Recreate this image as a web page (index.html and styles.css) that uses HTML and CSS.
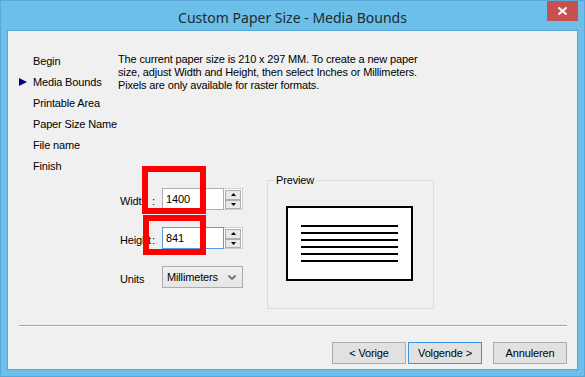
FILE: index.html
```html
<!DOCTYPE html>
<html>
<head>
<meta charset="utf-8">
<link rel="stylesheet" href="styles.css">
</head>
<body>
<div class="window">
  <div class="titlebar">
    <span class="title">Custom Paper Size - Media Bounds</span>
    <button class="close" aria-label="Close">
      <svg width="9" height="8" viewBox="0 0 9 8"><path d="M0.5 0.5 L8.5 7.5 M8.5 0.5 L0.5 7.5" stroke="#fff" stroke-width="2"/></svg>
    </button>
  </div>
  <div class="client">
    <div class="top">
      <ul class="steps">
        <li><span class="marker"></span>Begin</li>
        <li><span class="marker"><svg width="8" height="8" viewBox="0 0 8 8"><path d="M0 0 L8 4 L0 8 Z" fill="#00007f"/></svg></span>Media Bounds</li>
        <li><span class="marker"></span>Printable Area</li>
        <li><span class="marker"></span>Paper Size Name</li>
        <li><span class="marker"></span>File name</li>
        <li><span class="marker"></span>Finish</li>
      </ul>
      <div class="main">
        <p class="desc">The current paper size is 210 x 297 MM. To create a new paper<br>size, adjust Width and Height, then select Inches or Millimeters.<br>Pixels are only available for raster formats.</p>
        <div class="settings">
          <div class="form">
            <span class="lbl">Width</span><span class="colon">:</span>
            <div class="spin">
              <span class="val">1400</span>
              <span class="spinbtns">
                <span class="sbtn"><svg width="5" height="3" viewBox="0 0 5 3"><path d="M2.5 0 L5 3 L0 3 Z" fill="#000"/></svg></span>
                <span class="sbtn"><svg width="5" height="3" viewBox="0 0 5 3"><path d="M0 0 L5 0 L2.5 3 Z" fill="#000"/></svg></span>
              </span>
            </div>
            <span class="lbl">Height</span><span class="colon">:</span>
            <div class="spin">
              <span class="val focused">841</span>
              <span class="spinbtns">
                <span class="sbtn"><svg width="5" height="3" viewBox="0 0 5 3"><path d="M2.5 0 L5 3 L0 3 Z" fill="#000"/></svg></span>
                <span class="sbtn"><svg width="5" height="3" viewBox="0 0 5 3"><path d="M0 0 L5 0 L2.5 3 Z" fill="#000"/></svg></span>
              </span>
            </div>
            <span class="lbl lbl-wide">Units</span>
            <div class="select">
              <span>Millimeters</span>
              <svg width="8" height="5" viewBox="0 0 8 5"><path d="M0.5 0.5 L4 4 L7.5 0.5" stroke="#606060" stroke-width="1.6" fill="none"/></svg>
            </div>
            <span class="mark mark-1"></span>
            <span class="mark mark-2"></span>
          </div>
          <fieldset class="preview">
            <legend>Preview</legend>
            <svg class="paper" width="127" height="75" viewBox="0 0 127 75">
              <rect x="1" y="1" width="125" height="73" fill="#fff" stroke="#000" stroke-width="2"/>
              <g stroke="#000" stroke-width="2">
                <line x1="15" y1="20" x2="112" y2="20"/>
                <line x1="15" y1="27" x2="112" y2="27"/>
                <line x1="15" y1="34" x2="112" y2="34"/>
                <line x1="15" y1="41" x2="112" y2="41"/>
                <line x1="15" y1="48" x2="112" y2="48"/>
                <line x1="15" y1="55" x2="112" y2="55"/>
              </g>
            </svg>
          </fieldset>
        </div>
      </div>
    </div>
    <div class="sep"></div>
    <div class="buttons">
      <button class="btn">&lt; Vorige</button>
      <button class="btn default">Volgende &gt;</button>
      <button class="btn cancel">Annuleren</button>
    </div>
  </div>
</div>
</body>
</html>
```

FILE: styles.css
```css
* { box-sizing: border-box; }
html, body { margin: 0; padding: 0; }
body {
  width: 585px;
  height: 377px;
  overflow: hidden;
  font-family: "Liberation Sans", Arial, sans-serif;
  font-size: 11px;
  letter-spacing: -0.15px;
  color: #000;
}
.window {
  position: relative;
  width: 585px;
  height: 377px;
  background: #6bbfe8;
  border: 1px solid #59a8d6;
  padding: 0 6px 6px 6px;
  display: flex;
  flex-direction: column;
}
.titlebar {
  height: 29px;
  display: flex;
  justify-content: center;
  align-items: center;
}
.title {
  font-family: "Noto Sans", "Open Sans", sans-serif;
  font-size: 14px;
  letter-spacing: 0;
  color: #1f2a33;
  padding-top: 3px;
}
.close {
  position: absolute;
  top: 0;
  right: 6px;
  width: 31px;
  height: 20px;
  border: 0;
  padding: 0;
  background: #c75050;
  display: flex;
  align-items: center;
  justify-content: center;
}
.client {
  flex: 1;
  background: #f0f0f0;
  border: 1px solid #5aa5d2;
  display: flex;
  flex-direction: column;
  padding-bottom: 5px;
}
.top {
  display: flex;
}
.steps {
  list-style: none;
  margin: 0;
  padding: 19px 0 0 11px;
  width: 110px;
  flex: none;
}
.steps li {
  display: flex;
  align-items: center;
  height: 21px;
  white-space: nowrap;
}
.marker {
  width: 14px;
  flex: none;
  display: flex;
  align-items: center;
}
.main {
  flex: 1;
}
.desc {
  margin: 0;
  padding-top: 22px;
  line-height: 13px;
  white-space: nowrap;
}
.settings {
  display: flex;
  margin-top: 82px;
}
.form {
  position: relative;
  margin-top: 14px;
  padding-left: 2px;
  display: grid;
  grid-template-columns: 30px 12px 81px;
  grid-auto-rows: 22px;
  row-gap: 17px;
  align-self: flex-start;
}
.lbl {
  padding-top: 7px;
  line-height: 13px;
  white-space: nowrap;
}
.lbl-wide { grid-column: 1 / 3; }
.colon {
  padding-top: 7px;
  line-height: 13px;
  padding-left: 2px;
}
.spin {
  display: flex;
  height: 22px;
}
.val {
  width: 62px;
  height: 22px;
  border: 1px solid #abadb3;
  background: #fff;
  padding-left: 3px;
  line-height: 20px;
}
.val.focused { border-color: #569de5; }
.spinbtns {
  width: 19px;
  height: 22px;
  border: 1px solid #d0d0d0;
  border-left: 0;
  background: #fff;
  padding: 1px 1px 0 1px;
  display: flex;
  flex-direction: column;
}
.sbtn {
  height: 10px;
  border: 1px solid #acacac;
  background: #e8e8e8;
  display: flex;
  align-items: center;
  justify-content: center;
}
.select {
  height: 22px;
  border: 1px solid #acacac;
  background: linear-gradient(#f0f0f0, #e5e5e5);
  display: flex;
  align-items: center;
  justify-content: space-between;
  padding: 0 6px 0 4px;
}
.mark {
  position: absolute;
  border: 6px solid #ff0000;
}
.mark-1 { left: 24px; top: -22px; width: 64px; height: 48px; }
.mark-2 { left: 25px; top: 27px; width: 63px; height: 40px; }
.preview {
  margin: 0 0 0 24px;
  padding: 0;
  width: 167px;
  min-width: 0;
  border: 1px solid #dcdcdc;
}
.preview legend {
  margin-left: 6px;
  padding: 0 2px;
  line-height: 13px;
  font-size: 11px;
}
.paper {
  display: block;
  margin: 19px 0 27px 18px;
}
.sep {
  margin: auto 10px 0 11px;
  height: 2px;
  border-top: 1px solid #a0a0a0;
  border-bottom: 1px solid #ffffff;
}
.buttons {
  margin-top: 15px;
  display: flex;
  justify-content: flex-end;
  padding-right: 10px;
}
.btn {
  width: 74px;
  height: 22px;
  border: 1px solid #adadad;
  background: #e1e1e1;
  font-family: "Liberation Sans", Arial, sans-serif;
  font-size: 11px;
  letter-spacing: -0.15px;
  color: #000;
  padding: 0;
  margin-left: 2px;
}
.btn.default { border-color: #3c94e0; }
.btn.cancel { margin-left: 11px; }
```
